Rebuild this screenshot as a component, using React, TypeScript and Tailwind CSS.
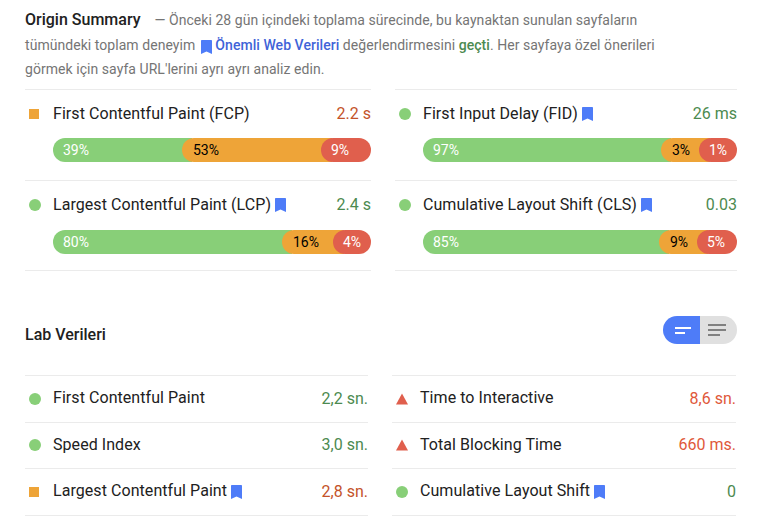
import React from "react";

const Bookmark = ({ className = "" }: { className?: string }) => (
  <svg width="11" height="14" viewBox="0 0 11 14" className={`inline-block shrink-0 ${className}`}>
    <path d="M1 0H10C10.6 0 11 .4 11 1V14L5.5 11.6 0 14V1C0 .4.4 0 1 0Z" fill="#4e7cf8" />
  </svg>
);

const Circle = () => <span className="block h-3 w-3 rounded-full bg-[#88cf78]" />;
const Square = () => <span className="block h-2.5 w-2.5 bg-[#eea438]" />;
const Triangle = () => (
  <svg width="12" height="12" viewBox="0 0 12 12" className="block">
    <path d="M6 .5L12 11.5H0Z" fill="#e05f4d" />
  </svg>
);

const indicators = { good: <Circle />, avg: <Square />, bad: <Triangle /> };
const colors = { good: "text-[#4c8a50]", avg: "text-[#c4532a]", bad: "text-[#e0583a]" };
type Kind = "good" | "avg" | "bad";

function Field({
  name,
  value,
  kind,
  mark,
  bars,
  labels,
  first,
}: {
  name: string;
  value: string;
  kind: Kind;
  mark?: boolean;
  bars: [number, number];
  labels: [string, string, string];
  first?: boolean;
}) {
  return (
    <div className={`border-b border-[#ebebeb] ${first ? "h-[92px] border-t" : "h-[90px]"}`}>
      <div className={`flex items-center ${first ? "h-[48px]" : "h-[49px] pb-[1px]"}`}>
        <span className="flex w-[28px] shrink-0 justify-start pl-1">{indicators[kind]}</span>
        <span className="text-base tracking-[0.06px] text-[#212121]">{name}</span>
        {mark && <Bookmark className="ml-[4px]" />}
        <span className={`ml-auto text-base ${colors[kind]}`}>{value}</span>
      </div>
      <div className="ml-[28px] flex h-6 overflow-hidden rounded-full text-sm leading-6">
        <div style={{ width: bars[0] }} className="shrink-0 bg-[#88cf78] pl-[10px] text-white">
          {labels[0]}
        </div>
        <div
          style={{ width: bars[1] }}
          className="-ml-[10px] shrink-0 rounded-l-full bg-[#eea438] pl-[11px] text-black"
        >
          {labels[1]}
        </div>
        <div className="-ml-[11px] flex-1 rounded-l-full bg-[#e05f4d] pl-[10px] text-white">{labels[2]}</div>
      </div>
    </div>
  );
}

function Lab({ name, value, kind, mark, lift = true }: { name: string; value: string; kind: Kind; mark?: boolean; lift?: boolean }) {
  return (
    <div className="flex h-[46.5px] items-center border-b border-[#ebebeb]">
      <span className="flex w-[28px] shrink-0 pl-1">{indicators[kind]}</span>
      <span className={`text-base tracking-[0.06px] text-[#212121] ${lift ? "mb-[2px]" : ""}`}>{name}</span>
      {mark && <Bookmark className="ml-[4px]" />}
      <span className={`ml-auto text-base ${colors[kind]}`}>{value}</span>
    </div>
  );
}

export default function App() {
  return (
    <div className="h-[528px] w-[758px] overflow-hidden bg-white pl-[25px] font-['Roboto',sans-serif]">
      <p className="h-[89px] w-[650px] pt-[8px] text-sm leading-[24.5px] tracking-[0.05px] text-[#757575]">
        <span className="mr-[14px] text-base leading-none font-medium tracking-normal text-[#212121]">Origin Summary</span>
        — Önceki 28 gün içindeki toplama sürecinde, bu kaynaktan sunulan sayfaların tümündeki toplam deneyim{" "}
        <Bookmark className="ml-[2px] -mb-[2px]" />{" "}
        <span className="font-medium text-[#3f63d8]">Önemli Web Verileri</span> değerlendirmesini{" "}
        <span className="font-medium text-[#4c8a50]">geçti</span>. Her sayfaya özel önerileri görmek için sayfa
        URL'lerini ayrı ayrı analiz edin.
      </p>

      <div className="grid w-[712px] grid-cols-[346px_342px] gap-x-[24px]">
        <Field first name="First Contentful Paint (FCP)" value="2.2 s" kind="avg" bars={[139, 150]} labels={["39%", "53%", "9%"]} />
        <Field first name="First Input Delay (FID)" value="26 ms" kind="good" mark bars={[248, 49]} labels={["97%", "3%", "1%"]} />
        <Field name="Largest Contentful Paint (LCP)" value="2.4 s" kind="good" mark bars={[239, 62]} labels={["80%", "16%", "4%"]} />
        <Field name="Cumulative Layout Shift (CLS)" value="0.03" kind="good" mark bars={[246, 49]} labels={["85%", "9%", "5%"]} />
      </div>

      <div className="mt-[45px] flex w-[712px] items-start justify-between">
        <h2 className="mt-[7px] text-base font-medium text-[#212121]">Lab Verileri</h2>
        <div className="flex h-7 w-[74px] overflow-hidden rounded-full">
          <div className="flex w-[37px] flex-col items-center justify-center gap-[3px] bg-[#4e7cf8]">
            <span className="ml-[3px] block h-[2px] w-4 bg-white" />
            <span className="mr-[3px] block h-[2px] w-[10px] bg-white" />
          </div>
          <div className="flex w-[37px] flex-col items-center justify-center gap-[3px] bg-[#e0e0e0]">
            <span className="mr-[3px] block h-[2px] w-[18px] bg-[#808080]" />
            <span className="mr-[3px] block h-[2px] w-[18px] bg-[#808080]" />
            <span className="mr-[9px] block h-[2px] w-[12px] bg-[#808080]" />
          </div>
        </div>
      </div>

      <div className="mt-[28px] grid w-[711px] grid-cols-[343px_344px] gap-x-[24px]">
        <div className="border-t border-[#ebebeb]">
          <Lab name="First Contentful Paint" value="2,2 sn." kind="good" />
          <Lab name="Speed Index" value="3,0 sn." kind="good" lift={false} />
          <Lab name="Largest Contentful Paint" value="2,8 sn." kind="avg" mark />
        </div>
        <div className="border-t border-[#ebebeb]">
          <Lab name="Time to Interactive" value="8,6 sn." kind="bad" />
          <Lab name="Total Blocking Time" value="660 ms." kind="bad" lift={false} />
          <Lab name="Cumulative Layout Shift" value="0" kind="good" mark />
        </div>
      </div>
    </div>
  );
}
